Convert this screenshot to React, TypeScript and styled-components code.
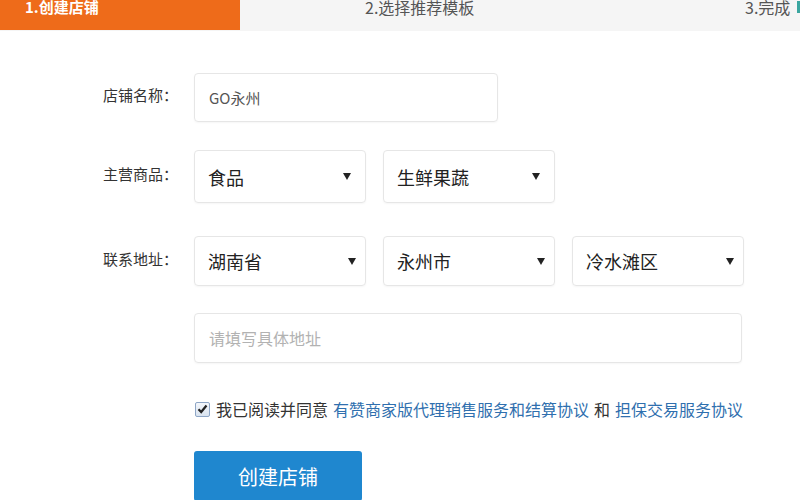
import React from "react";
import styled, { createGlobalStyle } from "styled-components";

const GlobalStyle = createGlobalStyle`
  html, body {
    margin: 0;
    padding: 0;
    background: #fff;
    overflow: hidden;
  }
  body {
    font-family: "Noto Sans CJK SC", "Noto Sans", "Liberation Sans", sans-serif;
  }
`;

const steps = [
  { text: "1.创建店铺", pad: 25, width: 240, active: true },
  { text: "2.选择推荐模板", pad: 125, width: 505, active: false },
  { text: "3.完成", pad: 0, width: 52, active: false },
];

export default function App() {
  return (
    <>
      <GlobalStyle />
      <Page>
        <TopBar>
          {steps.map((s) => (
            <Step key={s.text} $active={s.active} $pad={s.pad} $width={s.width}>
              <StepText>{s.text}</StepText>
            </Step>
          ))}
          <StepMark />
        </TopBar>

        <Form>
          <Row $mt={42}>
            <Label>店铺名称：</Label>
            <TextBox $width={304} $height={49}>GO永州</TextBox>
          </Row>

          <Row $mt={28}>
            <Label>主营商品：</Label>
            <Fields>
              <Select $height={53} $padR={14}>
                食品
                <Arrow />
              </Select>
              <Select $height={53} $padR={14}>
                生鲜果蔬
                <Arrow />
              </Select>
            </Fields>
          </Row>

          <Row $mt={33}>
            <Label>联系地址：</Label>
            <Fields>
              <Select $height={50} $padR={9}>
                湖南省
                <Arrow />
              </Select>
              <Select $height={50} $padR={9}>
                永州市
                <Arrow />
              </Select>
              <Select $height={50} $padR={9}>
                冷水滩区
                <Arrow />
              </Select>
            </Fields>
          </Row>

          <Row $mt={27}>
            <Label />
            <TextBox $width={548} $height={50} $placeholder>
              请填写具体地址
            </TextBox>
          </Row>

          <Row $mt={34}>
            <Label />
            <Agree>
              <CheckBox>
                <svg width="11" height="10" viewBox="0 0 11 10">
                  <path d="M1.5 5.2 L4.2 8 L9.5 1.5" fill="none" stroke="#222" strokeWidth="2.2" />
                </svg>
              </CheckBox>
              <AgreeText>我已阅读并同意</AgreeText>
              <Link>有赞商家版代理销售服务和结算协议</Link>
              <AgreeText>和</AgreeText>
              <Link>担保交易服务协议</Link>
            </Agree>
          </Row>

          <Row $mt={30}>
            <Label />
            <SubmitButton>创建店铺</SubmitButton>
          </Row>
        </Form>
      </Page>
    </>
  );
}

const Page = styled.div`
  width: 800px;
  height: 500px;
  display: flex;
  flex-direction: column;
  overflow: hidden;
`;

const TopBar = styled.div`
  flex: none;
  display: flex;
  height: 31px;
  background: #f5f5f5;
  overflow: hidden;
`;

const Step = styled.div<{ $active: boolean; $pad: number; $width: number }>`
  flex: none;
  width: ${(p) => p.$width}px;
  height: 30px;
  box-sizing: border-box;
  padding-left: ${(p) => p.$pad}px;
  background: ${(p) => (p.$active ? "#ee6b1a" : "transparent")};
  color: ${(p) => (p.$active ? "#fff" : "#555")};
  font-size: ${(p) => (p.$active ? "15px" : "16px")};
  font-weight: ${(p) => (p.$active ? 700 : 400)};
`;

const StepText = styled.div`
  line-height: 20px;
  margin-top: -3px;
  white-space: nowrap;
`;

const StepMark = styled.div`
  flex: none;
  width: 10px;
  height: 12px;
  margin-top: 1px;
  background: #3aa6a0;
`;

const Form = styled.div`
  flex: none;
  display: flex;
  flex-direction: column;
`;

const Row = styled.div<{ $mt: number }>`
  flex: none;
  display: flex;
  align-items: center;
  margin-top: ${(p) => p.$mt}px;
`;

const Label = styled.div`
  flex: none;
  width: 178px;
  margin-right: 16px;
  margin-top: -6px;
  text-align: right;
  font-size: 15px;
  color: #333;
  white-space: nowrap;
`;

const Fields = styled.div`
  display: flex;
  gap: 17px;
`;

const TextBox = styled.div<{ $width: number; $height: number; $placeholder?: boolean }>`
  flex: none;
  width: ${(p) => p.$width}px;
  height: ${(p) => p.$height}px;
  box-sizing: border-box;
  display: flex;
  align-items: center;
  padding-left: 14px;
  border: 1px solid #e6e6e6;
  border-radius: 4px;
  box-shadow: 0 1px 2px rgba(0, 0, 0, 0.04);
  font-size: ${(p) => (p.$placeholder ? "16px" : "15px")};
  color: ${(p) => (p.$placeholder ? "#b2b2b2" : "#555")};
`;

const Select = styled.div<{ $height: number; $padR: number }>`
  flex: none;
  width: 172px;
  height: ${(p) => p.$height}px;
  box-sizing: border-box;
  display: flex;
  align-items: center;
  justify-content: space-between;
  padding: 0 ${(p) => p.$padR}px 0 13px;
  border: 1px solid #e6e6e6;
  border-radius: 4px;
  box-shadow: 0 1px 2px rgba(0, 0, 0, 0.04);
  font-size: 18px;
  color: #222;
`;

const Arrow = styled.span`
  width: 0;
  height: 0;
  border-left: 4.5px solid transparent;
  border-right: 4.5px solid transparent;
  border-top: 7px solid #222;
`;

const Agree = styled.div`
  display: flex;
  align-items: center;
  font-size: 16px;
  white-space: nowrap;
`;

const CheckBox = styled.span`
  width: 15px;
  height: 15px;
  box-sizing: border-box;
  margin-left: 1px;
  margin-right: 6px;
  display: flex;
  align-items: center;
  justify-content: center;
  border: 1px solid #8ea6c6;
  border-radius: 2px;
  background: linear-gradient(#f4f7fb, #d9e3ef);
`;

const AgreeText = styled.span`
  color: #333;
  margin-right: 5px;
`;

const Link = styled.span`
  color: #2f6fae;
  margin-right: 5px;
`;

const SubmitButton = styled.div`
  flex: none;
  width: 168px;
  height: 50px;
  display: flex;
  align-items: center;
  justify-content: center;
  background: #1f87cf;
  border-radius: 3px;
  color: #fff;
  font-size: 20px;
`;
